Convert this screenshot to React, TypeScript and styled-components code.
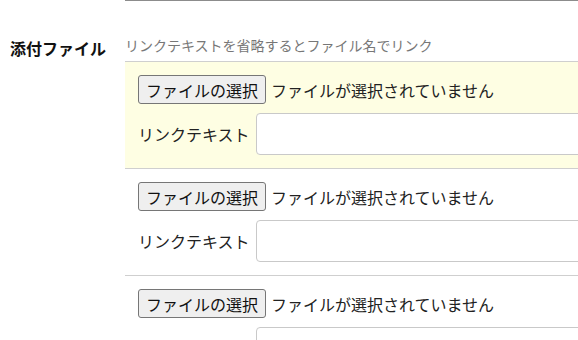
import React from "react";
import styled, { createGlobalStyle } from "styled-components";

const Global = createGlobalStyle`
  html, body {
    margin: 0;
    padding: 0;
    background: #ffffff;
    overflow: hidden;
  }
  body {
    font-family: "Noto Sans CJK JP", "Noto Sans", sans-serif;
    color: #222;
  }
`;

const Page = styled.div`
  display: flex;
  width: 760px;
`;

const FieldLabel = styled.div`
  width: 115px;
  flex: none;
  padding: 36px 0 0 10px;
  font-size: 16px;
  line-height: 24px;
  font-weight: 700;
  color: #111;
`;

const Field = styled.div`
  flex: 1;
  display: flex;
  flex-direction: column;
`;

const TopRule = styled.div`
  border-top: 1px solid #8c8c8c;
`;

const Hint = styled.div`
  margin-top: 34px;
  font-size: 14px;
  line-height: 20px;
  color: #777;
`;

const List = styled.div`
  margin-top: 6px;
  display: flex;
  flex-direction: column;
`;

const Item = styled.div<{ $highlight?: boolean }>`
  border-top: 1px solid #cfcfcf;
  background: ${(p) => (p.$highlight ? "#fefee3" : "#ffffff")};
  padding: 13px 0 13px 13px;
  display: flex;
  flex-direction: column;
  gap: 9px;
`;

const FileRow = styled.div`
  display: flex;
  align-items: center;
  gap: 5px;
  height: 29px;
`;

const FileButton = styled.button`
  box-sizing: border-box;
  height: 29px;
  width: 128px;
  padding: 0;
  border: 1px solid #767676;
  border-radius: 3px;
  background: #efefef;
  font-family: inherit;
  font-size: 16px;
  line-height: 20px;
  color: #111;
`;

const FileStatus = styled.span`
  font-size: 16px;
  line-height: 20px;
  color: #222;
`;

const TextRow = styled.div`
  display: flex;
  align-items: center;
  gap: 6px;
`;

const TextLabel = styled.label`
  width: 112px;
  flex: none;
  font-size: 16px;
  line-height: 20px;
  color: #222;
  white-space: nowrap;
`;

const TextInput = styled.input`
  box-sizing: border-box;
  height: 42px;
  width: 420px;
  border: 1px solid #c9c9c9;
  border-radius: 4px;
  background: #fff;
  font-family: inherit;
  font-size: 16px;
  outline: none;
`;

const items = [true, false, false];

export default function App() {
  return (
    <>
      <Global />
      <Page>
        <FieldLabel>添付ファイル</FieldLabel>
        <Field>
          <TopRule />
          <Hint>リンクテキストを省略するとファイル名でリンク</Hint>
          <List>
            {items.map((hl, i) => (
              <Item key={i} $highlight={hl}>
                <FileRow>
                  <FileButton type="button">ファイルの選択</FileButton>
                  <FileStatus>ファイルが選択されていません</FileStatus>
                </FileRow>
                <TextRow>
                  <TextLabel>リンクテキスト</TextLabel>
                  <TextInput type="text" />
                </TextRow>
              </Item>
            ))}
          </List>
        </Field>
      </Page>
    </>
  );
}
